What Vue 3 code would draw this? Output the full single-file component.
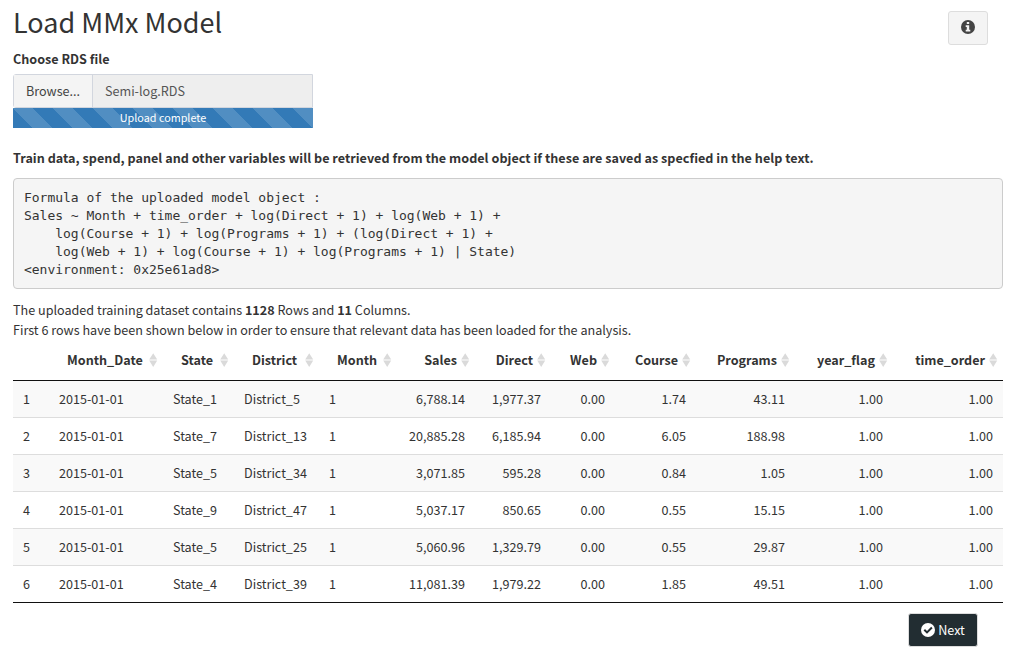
<script setup>
const columns = [
  { name: 'Month_Date', width: 114 },
  { name: 'State', width: 71 },
  { name: 'District', width: 85 },
  { name: 'Month', width: 78 },
  { name: 'Sales', width: 78, num: true },
  { name: 'Direct', width: 76, num: true },
  { name: 'Web', width: 64, num: true },
  { name: 'Course', width: 81, num: true },
  { name: 'Programs', width: 99, num: true },
  { name: 'year_flag', width: 98, num: true },
  { name: 'time_order', width: 110, num: true },
]

const rows = [
  ['2015-01-01', 'State_1', 'District_5', '1', '6,788.14', '1,977.37', '0.00', '1.74', '43.11', '1.00', '1.00'],
  ['2015-01-01', 'State_7', 'District_13', '1', '20,885.28', '6,185.94', '0.00', '6.05', '188.98', '1.00', '1.00'],
  ['2015-01-01', 'State_5', 'District_34', '1', '3,071.85', '595.28', '0.00', '0.84', '1.05', '1.00', '1.00'],
  ['2015-01-01', 'State_9', 'District_47', '1', '5,037.17', '850.65', '0.00', '0.55', '15.15', '1.00', '1.00'],
  ['2015-01-01', 'State_5', 'District_25', '1', '5,060.96', '1,329.79', '0.00', '0.55', '29.87', '1.00', '1.00'],
  ['2015-01-01', 'State_4', 'District_39', '1', '11,081.39', '1,979.22', '0.00', '1.85', '49.51', '1.00', '1.00'],
]

const formula = `Formula of the uploaded model object :
Sales ~ Month + time_order + log(Direct + 1) + log(Web + 1) +
    log(Course + 1) + log(Programs + 1) + (log(Direct + 1) +
    log(Web + 1) + log(Course + 1) + log(Programs + 1) | State)
<environment: 0x25e61ad8>`
</script>

<template>
  <main class="page">
    <header class="top">
      <h2>Load MMx Model</h2>
      <button class="info" aria-label="Help">
        <svg width="14" height="14" viewBox="0 0 14 14">
          <circle cx="7" cy="7" r="7" fill="#444" />
          <path fill="#f4f4f4" d="M5.8 2h2.4v2.1H5.8zM4.7 5.3h3.5v4.5h1.1v1.6H4.7V9.8h1.1V6.9H4.7z" />
        </svg>
      </button>
    </header>

    <label class="label">Choose RDS file</label>
    <div class="file">
      <span class="browse">Browse...</span>
      <span class="filename">Semi-log.RDS</span>
    </div>
    <div class="progress">Upload complete</div>

    <p class="note">Train data, spend, panel and other variables will be retrieved from the model object if these are saved as specfied in the help text.</p>
    <pre class="formula">{{ formula }}</pre>

    <p class="summary">The uploaded training dataset contains <b>1128</b> Rows and <b>11</b> Columns.<br />First 6 rows have been shown below in order to ensure that relevant data has been loaded for the analysis.</p>

    <table>
      <colgroup>
        <col class="index" />
        <col v-for="c in columns" :key="c.name" :style="{ width: c.width + 'px' }" />
      </colgroup>
      <thead>
        <tr>
          <th></th>
          <th v-for="c in columns" :key="c.name" :class="{ num: c.num }">
            {{ c.name }}
            <svg class="sort" width="9" height="14" viewBox="0 0 9 14">
              <path fill="#dadada" d="M4.2 .2l4 6.4h-8zM.2 7.6h8l-4 6.3z" />
            </svg>
          </th>
        </tr>
      </thead>
      <tbody>
        <tr v-for="(row, i) in rows" :key="i">
          <td>{{ i + 1 }}</td>
          <td v-for="(cell, j) in row" :key="j" :class="{ num: columns[j].num }">{{ cell }}</td>
        </tr>
      </tbody>
    </table>

    <footer class="actions">
      <button class="next">
        <svg width="14" height="14" viewBox="0 0 14 14">
          <circle cx="7" cy="7" r="7" fill="#fff" />
          <path d="M3.3 6.7l2.7 2.7 4.9-4.9" fill="none" stroke="#222d32" stroke-width="2" />
        </svg>
        <span>Next</span>
      </button>
    </footer>
  </main>
</template>

<style>
body {
  background: #fff;
}
</style>

<style scoped>
.page {
  box-sizing: border-box;
  width: 1031px;
  height: 654px;
  overflow: hidden;
  padding: 6px 28px 0 13px;
  font: 12.6px/20px "Noto Sans CJK SC", "Open Sans", sans-serif;
  color: #333;
}
.top {
  display: flex;
  justify-content: space-between;
  height: 43px;
}
h2 {
  margin: 0;
  font-size: 27px;
  line-height: 31px;
  font-weight: 400;
}
button {
  box-sizing: border-box;
  display: flex;
  align-items: center;
  justify-content: center;
  height: 34px;
  padding: 0;
  border: 1px solid #ddd;
  border-radius: 3px;
  font: inherit;
}
.info {
  width: 40px;
  margin: 5px 15px 0 0;
  padding-bottom: 2px;
  background: #f4f4f4;
}
.label {
  display: block;
  margin-bottom: 5px;
  font-weight: 700;
}
.file {
  box-sizing: border-box;
  display: flex;
  width: 300px;
  height: 34px;
  border: 1px solid #d2d6de;
  border-radius: 3px 0 0 3px;
  line-height: 32px;
}
.browse {
  width: 78px;
  padding-left: 12px;
  box-sizing: border-box;
  background: #f4f4f4;
  color: #444;
}
.filename {
  flex: 1;
  border-left: 1px solid #d2d6de;
  padding-left: 12px;
  background: #eee;
  color: #555;
}
.progress {
  box-sizing: border-box;
  width: 300px;
  height: 20px;
  margin-bottom: 20px;
  font-size: 10.8px;
  line-height: 18px;
  text-align: center;
  color: #fff;
  background: #337ab7 linear-gradient(45deg, rgba(255, 255, 255, .15) 25%, transparent 25%, transparent 50%, rgba(255, 255, 255, .15) 50%, rgba(255, 255, 255, .15) 75%, transparent 75%, transparent) 0 0 / 40px 40px;
}
.note {
  margin: 0 0 10px;
  font-weight: 700;
  letter-spacing: .023px;
}
.formula {
  box-sizing: border-box;
  height: 111px;
  margin: 0 0 11px;
  padding: 10px;
  border: 1px solid #ccc;
  border-radius: 4px;
  background: #f5f5f5;
  font: 13px/18px "DejaVu Sans Mono", monospace;
  letter-spacing: -.015px;
}
.summary {
  margin: 0;
}
table {
  width: 990px;
  table-layout: fixed;
  border-collapse: separate;
  border-spacing: 0;
  border-bottom: 1px solid #111;
}
.index {
  width: 36px;
}
th {
  position: relative;
  box-sizing: border-box;
  height: 41px;
  padding: 0 18px;
  text-align: left;
  white-space: nowrap;
  border-bottom: 1px solid #111;
}
td {
  box-sizing: border-box;
  height: 37px;
  padding: 0 10px;
  white-space: nowrap;
  border-top: 1px solid #ddd;
}
tbody tr:first-child td {
  height: 36px;
  border-top: 0;
}
tbody tr:nth-child(odd) {
  background: #f9f9f9;
}
.num {
  text-align: right;
}
.sort {
  position: absolute;
  right: 5px;
  top: 13px;
}
.actions {
  display: flex;
  justify-content: flex-end;
  padding: 10px 25px 0 0;
}
.next {
  width: 70px;
  gap: 3px;
  background: #222d32;
  color: #fff;
}
</style>
